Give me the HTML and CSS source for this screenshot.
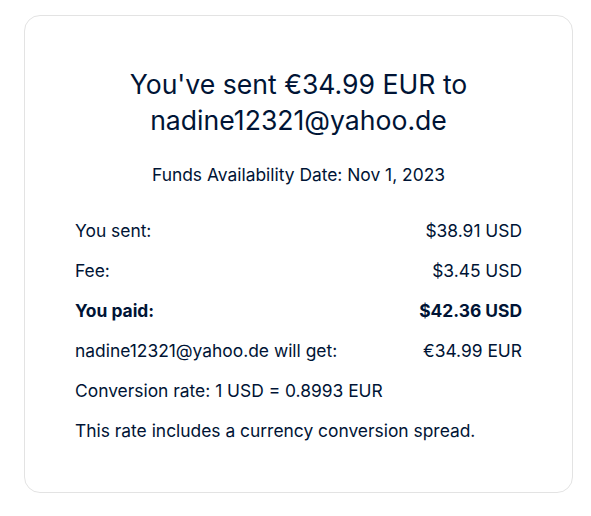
FILE: index.html
```html
<!DOCTYPE html>
<html>
<head>
<meta charset="utf-8">
<link rel="stylesheet" href="styles.css">
</head>
<body>
<div class="card">
  <h1 class="title">You've sent €34.99 EUR to nadine12321@yahoo.de</h1>
  <p class="date">Funds Availability Date: Nov 1, 2023</p>
  <div class="rows">
    <div class="row"><span>You sent:</span><span>$38.91 USD</span></div>
    <div class="row"><span>Fee:</span><span>$3.45 USD</span></div>
    <div class="row bold"><span>You paid:</span><span>$42.36 USD</span></div>
    <div class="row"><span>nadine12321@yahoo.de will get:</span><span>€34.99 EUR</span></div>
    <div class="row"><span>Conversion rate: 1 USD = 0.8993 EUR</span></div>
    <div class="row"><span>This rate includes a currency conversion spread.</span></div>
  </div>
</div>
</body>
</html>
```
FILE: styles.css
```css
html, body { margin: 0; padding: 0; background: #fff; }
body {
  font-family: Inter, "Liberation Sans", sans-serif;
  color: #001435;
  padding: 15px 17px 0 24px;
}
.card {
  width: 549px;
  height: 478px;
  box-sizing: border-box;
  border: 1px solid #e3e3e3;
  border-radius: 16px;
  padding: 50px 50px 0 50px;
}
.title {
  margin: 0 auto;
  width: 400px;
  text-align: center;
  font-size: 26.6px;
  font-weight: 400;
  line-height: 36px;
}
.date {
  margin: 25px 0 0;
  text-align: center;
  font-size: 17.4px;
  line-height: 24px;
}
.rows { margin-top: 32px; }
.row {
  display: flex;
  justify-content: space-between;
  font-size: 17.4px;
  line-height: 24px;
  height: 40px;
}
.bold { font-weight: 700; }
```
